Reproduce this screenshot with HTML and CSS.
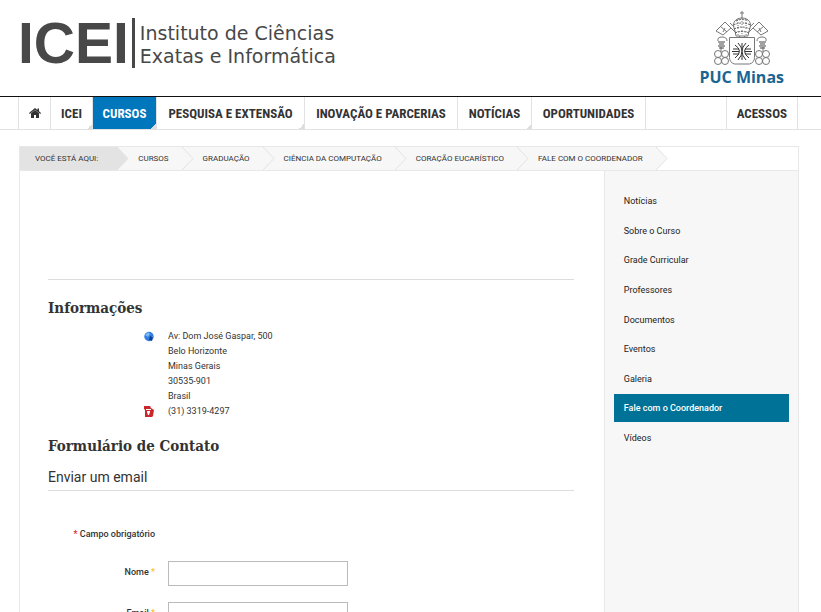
FILE: index.html
```html
<!DOCTYPE html>
<html lang="pt-br">
<head>
  <meta charset="utf-8">
  <meta name="viewport" content="width=device-width, initial-scale=1">
  <title>Fale com o Coordenador</title>
  <link rel="stylesheet" href="styles.css">
</head>
<body>
  <header class="header">
    <a class="logo" href="#">
      <span class="logo-sigla">ICEI</span>
      <span class="logo-nome">Instituto de Ciências<br>Exatas e Informática</span>
    </a>
    <a class="puc" href="#">
      <svg class="brasao" viewBox="0 0 58 56" width="58" height="56" fill="none" stroke="#777" stroke-width="1" aria-hidden="true">
        <!-- chaves -->
        <path d="M3 20l9-9 6 6-8 7zM55 20l-9-9-6 6 8 7z" fill="#fff"/>
        <path d="M7 15l7 6M10 21l2-4M51 15l-7 6M48 21l-2-4M14 13l13 13M17 12l15 14M44 13L31 26M41 12L26 26"/>
        <!-- tiara -->
        <path d="M22 20c-4-9 1-13 7-13s11 4 7 13l-1 5H23z" fill="#fff"/>
        <path d="M29 0v7M27 2h4"/>
        <path d="M23 10q6-3 12 0M20.500 14q8.500-4 17 0M21 18q8-4 16 0M22 22q7-3 14 0" stroke="#555" stroke-dasharray="2 1"/>
        <path d="M25 8v16M29 7v17M33 8v16" stroke-dasharray="1 2"/>
        <!-- borlas -->
        <path d="M5 30q-1-4 4-4t5 4M44 30q0-4 5-4t4 4M8 36v5M50 36v5"/>
        <path d="M5 31h7M6 33h5M5 35h7M6 37h5M46 31h7M47 33h5M46 35h7M47 37h5" stroke="#444"/>
        <circle cx="5" cy="43" r="3.500"/><circle cx="12" cy="43" r="3.500"/><circle cx="5" cy="50" r="3.500"/><circle cx="12" cy="50" r="3.500"/>
        <circle cx="46" cy="43" r="3.500"/><circle cx="53" cy="43" r="3.500"/><circle cx="46" cy="50" r="3.500"/><circle cx="53" cy="50" r="3.500"/>
        <!-- escudo -->
        <path d="M16.500 26.500h25v20q0 5-5 6.500h-15q-5-1.500-5-6.500z" fill="#fff"/>
        <path d="M22 34q9 6 0 13M25 32q8 8 0 17M36 34q-9 6 0 13M33 32q-8 8 0 17M29 32v5M29 44v5M20 38h6M19 40.500h7M20 43h6M38 38h-6M39 40.500h-7M38 43h-6" stroke="#333"/>
      </svg>
      <span class="puc-nome">PUC Minas</span>
    </a>
  </header>

  <nav class="menu">
    <ul class="menu-lista">
      <li><a class="home" href="#" aria-label="Início">
        <svg viewBox="0 0 12 10" width="12" height="10" fill="#333" aria-hidden="true"><path d="M6 0l2.500 2V.500H10v2.800L12 5l-.700 1L6 1.700.700 6 0 5z"/><path d="M2 5.300l4-3.200 4 3.200V10H7V7H5v3H2z"/></svg>
      </a></li>
      <li class="sub"><a href="#">ICEI</a></li>
      <li class="sub ativo"><a href="#">CURSOS</a></li>
      <li class="sub"><a href="#">PESQUISA E EXTENSÃO</a></li>
      <li><a href="#">INOVAÇÃO E PARCERIAS</a></li>
      <li class="sub"><a href="#">NOTÍCIAS</a></li>
      <li><a href="#">OPORTUNIDADES</a></li>
      <li class="acessos"><a href="#">ACESSOS</a></li>
    </ul>
  </nav>

  <div class="pagina">
    <ol class="breadcrumb">
      <li class="aqui"><span>VOCÊ ESTÁ AQUI:</span><svg viewBox="0 0 12 23" width="12" height="23"><path class="cheio" d="M0 0l11 11.500L0 23z"/></svg></li>
      <li><a href="#">CURSOS</a><svg viewBox="0 0 12 23" width="12" height="23"><path d="M0 0l11 11.500L0 23"/></svg></li>
      <li><a href="#">GRADUAÇÃO</a><svg viewBox="0 0 12 23" width="12" height="23"><path d="M0 0l11 11.500L0 23"/></svg></li>
      <li><a href="#">CIÊNCIA DA COMPUTAÇÃO</a><svg viewBox="0 0 12 23" width="12" height="23"><path d="M0 0l11 11.500L0 23"/></svg></li>
      <li><a href="#">CORAÇÃO EUCARÍSTICO</a><svg viewBox="0 0 12 23" width="12" height="23"><path d="M0 0l11 11.500L0 23"/></svg></li>
      <li><a href="#">FALE COM O COORDENADOR</a><svg class="fim" viewBox="0 0 12 23" width="12" height="23"><path d="M0 0l11 11.500L0 23"/></svg></li>
    </ol>

    <div class="colunas">
      <main class="conteudo">
        <section class="info">
          <h3>Informações</h3>
          <div class="dados">
            <svg viewBox="0 0 10 11" width="10" height="11" aria-hidden="true"><circle cx="5" cy="5.500" r="4.700" fill="#2f7de0"/><path d="M1 4l3-3 2 2-2 3zM6 6l3-1v3L6 10z" fill="#7db8f7"/><path d="M6 5l3 1-1 4-3-1z" fill="#0b3f9e"/></svg>
            <address>Av: Dom José Gaspar, 500<br>Belo Horizonte<br>Minas Gerais<br>30535-901<br>Brasil</address>
            <svg viewBox="0 0 10 11" width="10" height="11" aria-hidden="true"><path d="M0 0h6l1 2 3 2-1 6-1 1H1V4L0 3z" fill="#c8282c"/><path d="M2 3h5v1H2zM3 5h3v1l-1 3H4L3 6z" fill="#fff"/></svg>
            <span>(31) 3319-4297</span>
          </div>
        </section>

        <section class="contato">
          <h3>Formulário de Contato</h3>
          <form>
            <h4>Enviar um email</h4>
            <p class="obrigatorio"><span class="vermelho">*</span> Campo obrigatório</p>
            <div class="campo">
              <label for="nome">Nome <span class="estrela">*</span></label>
              <input type="text" id="nome">
            </div>
            <div class="campo">
              <label for="email">Email <span class="estrela">*</span></label>
              <input type="email" id="email">
            </div>
          </form>
        </section>
      </main>

      <aside class="lateral">
        <ul>
          <li><a href="#">Notícias</a></li>
          <li><a href="#">Sobre o Curso</a></li>
          <li><a href="#">Grade Curricular</a></li>
          <li><a href="#">Professores</a></li>
          <li><a href="#">Documentos</a></li>
          <li><a href="#">Eventos</a></li>
          <li><a href="#">Galeria</a></li>
          <li><a class="atual" href="#">Fale com o Coordenador</a></li>
          <li><a href="#">Vídeos</a></li>
        </ul>
      </aside>
    </div>
  </div>
</body>
</html>
```
FILE: styles.css
```css
* {
  box-sizing: border-box;
}

html {
  overflow: hidden;
}

body {
  margin: 0;
  background: #fff;
  color: #333;
  font-family: Roboto, sans-serif;
  font-size: 9px;
  line-height: 15px;
}

a {
  color: inherit;
  text-decoration: none;
}

ul,
ol {
  margin: 0;
  padding: 0;
  list-style: none;
}

/* topo */
.header {
  display: flex;
  justify-content: space-between;
  align-items: flex-start;
  min-height: 96px;
  padding: 11px 37px 0 18px;
}

.logo {
  display: flex;
  align-items: center;
  margin-top: 7px;
  color: #484848;
}

.logo-sigla {
  padding-right: 3px;
  border-right: 3px solid #484848;
  font-family: "Liberation Sans", Arial, sans-serif;
  font-size: 57px;
  font-weight: bold;
  line-height: 50px;
}

.logo-nome {
  padding: 3px 0 0 5px;
  font-family: "DejaVu Sans", sans-serif;
  font-size: 19px;
  line-height: 23px;
}

.puc {
  display: flex;
  flex-direction: column;
  align-items: center;
  color: #1a6491;
}

.puc-nome {
  font-family: "Open Sans", sans-serif;
  font-size: 16px;
  font-weight: bold;
  line-height: 20px;
}

/* menu principal */
.menu {
  padding: 0 23px 0 18px;
  border-top: 1px solid #111;
  border-bottom: 1px solid #e2e2e2;
}

.menu-lista {
  display: grid;
  grid-template-columns: 32px 42px 64px 148px 153px 74px 114px 1fr;
  border-left: 1px solid #e2e2e2;
}

.menu-lista li {
  border-right: 1px solid #e2e2e2;
}

.menu-lista a {
  display: flex;
  align-items: center;
  justify-content: center;
  height: 32px;
  font-family: "Roboto Condensed", "Liberation Sans Narrow", Roboto, sans-serif;
  font-size: 13px;
  font-weight: bold;
  white-space: nowrap;
}

.menu-lista .sub {
  background: linear-gradient(135deg, transparent 50%, #ddd 50%) right bottom / 5px 5px no-repeat;
}

.menu-lista .ativo {
  background-color: #0077bd;
  color: #fff;
}

.menu-lista .acessos {
  justify-self: end;
  padding: 0 10px;
  border-left: 1px solid #e2e2e2;
}

/* caminho */
.pagina {
  margin: 16px 22px 0 19px;
}

.breadcrumb {
  display: flex;
  border: 1px solid #e8e8e8;
  font-size: 8px;
  line-height: 23px;
}

.breadcrumb li {
  display: flex;
  background: #f7f7f7;
  white-space: nowrap;
}

.breadcrumb a {
  padding: 0 13px 0 9px;
}

.breadcrumb svg {
  fill: #f7f7f7;
  stroke: #e2e2e2;
}

.breadcrumb .aqui span {
  padding: 0 19px 0 15px;
  background: #e3e3e3;
}

.breadcrumb .cheio {
  fill: #e3e3e3;
}

.breadcrumb .fim {
  background: #fff;
}

/* colunas */
.colunas {
  display: flex;
  border: 1px solid #e8e8e8;
  border-top: 0;
}

.conteudo {
  flex: 3;
  padding: 108px 30px 40px 28px;
}

.lateral {
  flex: 1;
  padding: 16px 9px;
  border-left: 1px solid #e8e8e8;
  background: #f7f7f7;
  color: #222;
}

.lateral ul {
  display: flex;
  flex-direction: column;
  justify-content: space-between;
  min-height: 265px;
}

.lateral a {
  display: block;
  padding: 0 10px;
  line-height: 28px;
}

.lateral .atual {
  background: #007297;
  color: #fff;
  font-weight: 500;
}

/* informacoes e formulario */
h3 {
  margin: 0;
  font-family: "Roboto Slab", "DejaVu Serif Condensed", "DejaVu Serif", serif;
  font-size: 15px;
  font-weight: bold;
  line-height: 20px;
}

.info {
  padding-top: 18px;
  border-top: 1px solid #ddd;
}

.dados {
  display: grid;
  grid-template-columns: 10px 1fr;
  column-gap: 14px;
  padding: 11px 0 0 96px;
}

.dados svg {
  margin-top: 2px;
}

.dados address {
  font-style: normal;
}

.contato {
  padding-top: 17px;
}

h4 {
  margin: 9px 0 0;
  padding-bottom: 1px;
  border-bottom: 1px solid #ddd;
  font-size: 14px;
  font-weight: 400;
  line-height: 24px;
}

.obrigatorio {
  width: 107px;
  margin: 36px 0 19px;
  font-weight: 500;
  text-align: right;
  white-space: nowrap;
}

.vermelho {
  color: #d22;
}

.estrela {
  color: #fb3;
}

.campo {
  display: flex;
  align-items: flex-start;
  gap: 13px;
  margin-bottom: 16px;
}

.campo label {
  width: 107px;
  padding-top: 4px;
  font-weight: 500;
  text-align: right;
}

.campo input {
  width: 180px;
  height: 25px;
  padding: 4px;
  border: 1px solid #bbb;
  background: #fff;
}
```
